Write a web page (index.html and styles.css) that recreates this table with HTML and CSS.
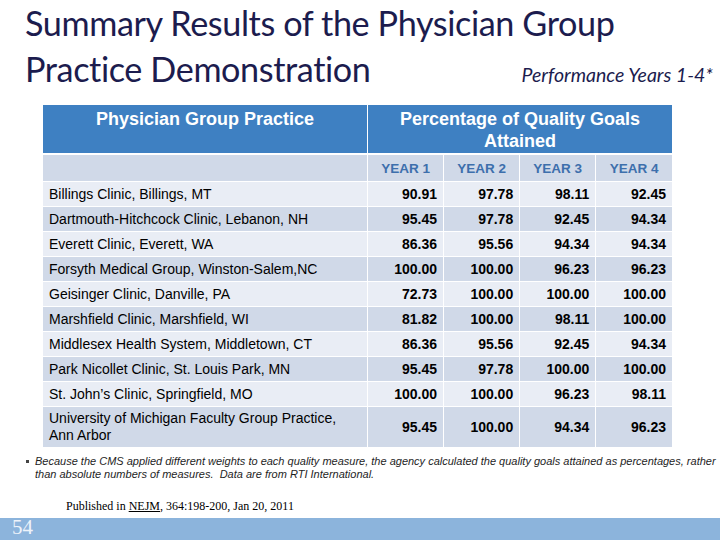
FILE: index.html
```html
<!DOCTYPE html>
<html>
<head>
<meta charset="utf-8">
<link rel="stylesheet" href="styles.css">
</head>
<body>
<div class="slide">
  <header class="title">
    <div class="title-line">Summary Results of the Physician Group</div>
    <div class="title-line title-row">
      <span>Practice Demonstration</span>
      <span class="subtitle">Performance Years 1-4*</span>
    </div>
  </header>

  <table class="results">
    <colgroup>
      <col class="c-name">
      <col class="c-year">
      <col class="c-year">
      <col class="c-year">
      <col class="c-year">
    </colgroup>
    <thead>
      <tr class="head-main">
        <th>Physician Group Practice</th>
        <th colspan="4">Percentage of Quality Goals Attained</th>
      </tr>
      <tr class="head-years dark">
        <th></th>
        <th>YEAR 1</th>
        <th>YEAR 2</th>
        <th>YEAR 3</th>
        <th>YEAR 4</th>
      </tr>
    </thead>
    <tbody>
      <tr class="light"><td>Billings Clinic, Billings, MT</td><td>90.91</td><td>97.78</td><td>98.11</td><td>92.45</td></tr>
      <tr class="dark"><td>Dartmouth-Hitchcock Clinic, Lebanon, NH</td><td>95.45</td><td>97.78</td><td>92.45</td><td>94.34</td></tr>
      <tr class="light"><td>Everett Clinic, Everett, WA</td><td>86.36</td><td>95.56</td><td>94.34</td><td>94.34</td></tr>
      <tr class="dark"><td>Forsyth Medical Group, Winston-Salem,NC</td><td>100.00</td><td>100.00</td><td>96.23</td><td>96.23</td></tr>
      <tr class="light"><td>Geisinger Clinic, Danville, PA</td><td>72.73</td><td>100.00</td><td>100.00</td><td>100.00</td></tr>
      <tr class="dark"><td>Marshfield Clinic, Marshfield, WI</td><td>81.82</td><td>100.00</td><td>98.11</td><td>100.00</td></tr>
      <tr class="light"><td>Middlesex Health System, Middletown, CT</td><td>86.36</td><td>95.56</td><td>92.45</td><td>94.34</td></tr>
      <tr class="dark"><td>Park Nicollet Clinic, St. Louis Park, MN</td><td>95.45</td><td>97.78</td><td>100.00</td><td>100.00</td></tr>
      <tr class="light"><td>St. John’s Clinic, Springfield, MO</td><td>100.00</td><td>100.00</td><td>96.23</td><td>98.11</td></tr>
      <tr class="dark tall"><td>University of Michigan Faculty Group Practice, Ann Arbor</td><td>95.45</td><td>100.00</td><td>94.34</td><td>96.23</td></tr>
    </tbody>
  </table>

  <ul class="notes">
    <li>Because the CMS applied different weights to each quality measure, the agency calculated the quality goals attained as percentages, rather than absolute numbers of measures.&nbsp; Data are from RTI International.</li>
  </ul>

  <p class="source">Published in <u>NEJM</u>, 364:198-200, Jan 20, 2011</p>

  <footer class="bar"><span class="page">54</span></footer>
</div>
</body>
</html>
```

FILE: styles.css
```css
html, body {
  margin: 0;
  padding: 0;
  background: #ffffff;
}

.slide {
  width: 720px;
  height: 540px;
  display: flex;
  flex-direction: column;
  overflow: hidden;
  background: #ffffff;
}

.title {
  padding: 0 7px 0 25px;
  font-family: Lato, "Open Sans", sans-serif;
  font-size: 34.2px;
  letter-spacing: -0.4px;
  line-height: 46px;
  color: #1c1c4e;
  font-variant-ligatures: none;
}

.title-row {
  display: flex;
  justify-content: space-between;
  align-items: baseline;
}

.subtitle {
  font-style: italic;
  font-size: 19.5px;
  letter-spacing: 0;
}

.results {
  margin: 7px 0 0 43px;
  width: 629px;
  border-collapse: collapse;
  table-layout: fixed;
  font-family: "Liberation Sans", Arial, sans-serif;
  font-size: 14px;
  color: #000000;
}

.c-name { width: 324px; }
.c-year { width: 76px; }

.results th,
.results td {
  border: 1px solid #ffffff;
  padding: 0;
}

.results tr > :first-child { border-left: none; }
.results tr > :last-child { border-right: none; }

.head-main th {
  background: #3e80c2;
  color: #ffffff;
  font-size: 18px;
  font-weight: bold;
  line-height: 22px;
  padding: 3px 8px 1px;
  vertical-align: top;
  text-align: center;
  border-top: none;
  border-bottom: 2px solid #ffffff;
}

.head-years th {
  height: 26px;
  font-size: 13.5px;
  font-weight: bold;
  color: #3d6fac;
  text-align: center;
}

.dark { background: #d0d9e8; }
.light { background: #e9edf5; }

.results tbody td {
  height: 24px;
  text-align: right;
  font-weight: bold;
  padding-right: 6px;
  line-height: 17px;
}

.results tbody td:first-child {
  text-align: left;
  font-weight: normal;
  padding-left: 6px;
  padding-right: 4px;
}

.results tbody tr.tall td {
  height: 40px;
}

.results tbody tr:last-child td { border-bottom: none; }

.notes {
  margin: 8px 0 0 0;
  padding: 0 3px 0 35px;
  list-style: none;
  font-family: "Liberation Sans", Arial, sans-serif;
  font-style: italic;
  font-size: 11px;
  line-height: 12.5px;
  color: #1e1e1e;
}

.notes li {
  position: relative;
}

.notes li::before {
  content: "";
  position: absolute;
  left: -9px;
  top: 5px;
  width: 3px;
  height: 3px;
  background: #444444;
}

.source {
  margin: 19px 0 0 66px;
  font-family: "Liberation Serif", "Times New Roman", serif;
  font-size: 12px;
  line-height: 14px;
  color: #000000;
}

.bar {
  margin-top: auto;
  height: 22px;
  background: #8cb4dc;
  display: flex;
  align-items: flex-end;
}

.page {
  margin-left: 12px;
  font-family: "Liberation Serif", "Times New Roman", serif;
  font-size: 21px;
  line-height: 22px;
  color: #eef3fa;
  transform: translateY(-2px);
}
```
